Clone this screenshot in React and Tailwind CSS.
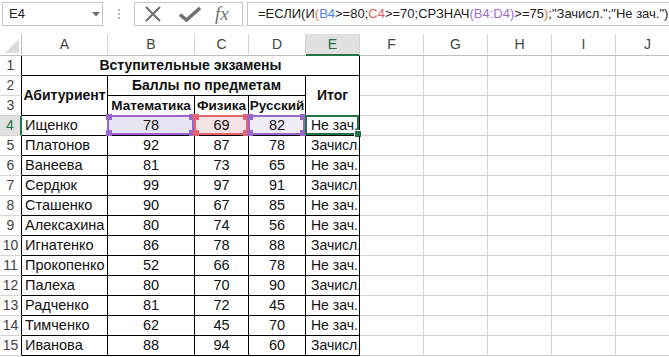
import React from 'react';

const rows = [
  ['Ищенко', 78, 69, 82, 'Не зач.'],
  ['Платонов', 92, 87, 78, 'Зачисл.'],
  ['Ванеева', 81, 73, 65, 'Не зач.'],
  ['Сердюк', 99, 97, 91, 'Зачисл.'],
  ['Сташенко', 90, 67, 85, 'Не зач.'],
  ['Алексахина', 80, 74, 56, 'Не зач.'],
  ['Игнатенко', 86, 78, 88, 'Зачисл.'],
  ['Прокопенко', 52, 66, 78, 'Не зач.'],
  ['Палеха', 80, 70, 90, 'Зачисл.'],
  ['Радченко', 81, 72, 45, 'Не зач.'],
  ['Тимченко', 62, 45, 70, 'Не зач.'],
  ['Иванова', 88, 94, 60, 'Зачисл.'],
];

const letters = ['A', 'B', 'C', 'D', 'E', 'F', 'G', 'H', 'I', 'J'];

function RowHead({ n, active }) {
  return (
    <div
      className={
        'flex items-center justify-center border-b border-b-[#d4d4d4] text-[14px] ' +
        (active
          ? 'bg-[#e1e1e1] text-[#217346] border-r-2 border-r-[#217346]'
          : 'bg-white text-[#444] border-r border-r-black')
      }
    >
      {n}
    </div>
  );
}

function Empty() {
  return <div className="border-r border-b border-[#d4d4d4]" />;
}

function Blanks() {
  return (
    <>
      <Empty />
      <Empty />
      <Empty />
      <Empty />
      <Empty />
    </>
  );
}

function Corners({ color }) {
  return (
    <>
      <span className={'absolute -left-[3px] -top-[3px] w-[6px] h-[6px] ' + color} />
      <span className={'absolute -right-[3px] -top-[3px] w-[6px] h-[6px] ' + color} />
      <span className={'absolute -left-[3px] -bottom-[3px] w-[6px] h-[6px] ' + color} />
      <span className={'absolute -right-[3px] -bottom-[3px] w-[6px] h-[6px] ' + color} />
    </>
  );
}

function FormulaBar() {
  return (
    <div className="flex items-start h-[34px] pt-[2px] pl-[2px] bg-white">
      <div className="relative w-[101px] h-[24px] border border-[#c6c6c6] flex items-center pl-[6px] text-[13px] text-[#222]">
        E4
        <svg className="absolute left-[89px] top-[9px]" width="8" height="5" viewBox="0 0 8 5">
          <path d="M0 0 L8 0 L4 4.5 Z" fill="#6d6d6d" />
        </svg>
      </div>
      <div className="w-[31px] h-[24px] flex flex-col items-center justify-center gap-[2px]">
        <span className="w-[2px] h-[2px] bg-[#b5b5b5]" />
        <span className="w-[2px] h-[2px] bg-[#b5b5b5]" />
        <span className="w-[2px] h-[2px] bg-[#b5b5b5]" />
      </div>
      <div className="w-[109px] h-[24px] border border-[#c6c6c6] flex items-center pl-[9px]">
        <svg width="18" height="18" viewBox="0 0 18 18">
          <path d="M2 2 L16 16 M16 2 L2 16" stroke="#707070" strokeWidth="2.1" />
        </svg>
        <svg className="ml-[17px]" width="22" height="18" viewBox="0 0 22 18">
          <path d="M1 9.5 L7.5 15 L21 3" stroke="#707070" strokeWidth="3.4" fill="none" />
        </svg>
        <span
          className="ml-[14px] text-[19px] italic text-[#707070] leading-none -mt-[2px]"
          style={{ fontFamily: '"Liberation Serif", serif' }}
        >
          fx
        </span>
      </div>
      <div className="ml-[4px] flex-1 h-[24px] border border-r-0 border-[#c6c6c6] flex items-center pl-[10px] text-[13px] text-[#222] whitespace-nowrap overflow-hidden">
        <span>=ЕСЛИ(И</span>
        <span className="text-[#e0793d]">(</span>
        <span className="text-[#4a86e8]">B4</span>
        <span>&gt;=80;</span>
        <span className="text-[#e06060]">C4</span>
        <span>&gt;=70;СРЗНАЧ</span>
        <span className="text-[#9b6fd0]">(B4:D4)</span>
        <span>&gt;=75</span>
        <span className="text-[#e0793d]">)</span>
        <span>;"Зачисл.";"Не зач.")</span>
      </div>
    </div>
  );
}

export default function App() {
  const bk = 'border-r border-b border-black';
  const dc = 'flex items-end pb-[1px] leading-[18px] text-[14.5px] ';
  return (
    <div
      className="w-[669px] h-[357px] overflow-hidden bg-white text-[#111]"
      style={{ fontFamily: '"Liberation Sans", Arial, sans-serif' }}
    >
      <FormulaBar />
      <div className="grid grid-cols-[22px_86px_87px_54px_57px_54px_64px_64px_64px_64px_64px] grid-rows-[22px_repeat(15,20px)] w-[680px] text-[14px]">
        {/* column headers */}
        <div className="relative border-r border-b border-[#bfbfbf] bg-white">
          <svg className="absolute right-[2px] bottom-[2px]" width="14" height="14" viewBox="0 0 14 14">
            <path d="M14 0 L14 14 L0 14 Z" fill="#dcdcdc" />
          </svg>
        </div>
        {letters.map((l) =>
          l === 'E' ? (
            <div
              key={l}
              className="flex items-center justify-center bg-[#e1e1e1] text-[#217346] border-r border-r-[#d4d4d4] border-b-2 border-b-[#217346]"
            >
              {l}
            </div>
          ) : (
            <div
              key={l}
              className="flex items-center justify-center bg-white text-[#444] border-r border-r-[#d4d4d4] border-b border-b-[#bfbfbf]"
            >
              {l}
            </div>
          )
        )}

        {/* row 1 */}
        <RowHead n={1} />
        <div className={'col-span-5 flex items-center justify-center font-bold ' + bk}>
          Вступительные экзамены
        </div>
        <Blanks />

        {/* row 2 */}
        <RowHead n={2} />
        <div className={'row-span-2 flex items-center justify-center font-bold ' + bk}>Абитуриент</div>
        <div className={'col-span-3 flex items-center justify-center font-bold ' + bk}>
          Баллы по предметам
        </div>
        <div className={'row-span-2 flex items-center justify-center font-bold ' + bk}>Итог</div>
        <Blanks />

        {/* row 3 */}
        <RowHead n={3} />
        <div className={'flex items-end justify-center font-bold text-[13.5px] leading-[18px] ' + bk}>Математика</div>
        <div className={'flex items-end justify-center font-bold text-[13.5px] leading-[18px] ' + bk}>Физика</div>
        <div className={'flex items-end justify-center font-bold text-[13.5px] leading-[18px] ' + bk}>Русский</div>
        <Blanks />

        {rows.map((r, i) => {
          const n = i + 4;
          const sel = n === 4;
          return (
            <React.Fragment key={n}>
              <RowHead n={n} active={sel} />
              <div className={dc + 'pl-[3px] ' + bk}>{r[0]}</div>
              <div className={'relative justify-center ' + dc + bk + (sel ? ' bg-[#e7e5f4]' : '')}>
                {r[1]}
                {sel && (
                  <div className="absolute -left-[1px] -top-[1px] right-0 bottom-0 border-2 border-[#9966cc]">
                    <Corners color="bg-[#9966cc]" />
                  </div>
                )}
              </div>
              <div className={'relative justify-center ' + dc + bk + (sel ? ' bg-[#f4e3e6]' : '')}>
                {r[2]}
                {sel && (
                  <div className="absolute -left-[1px] -top-[1px] right-0 bottom-0 border-2 border-[#e8646a]">
                    <Corners color="bg-[#e8646a]" />
                  </div>
                )}
              </div>
              <div className={'relative justify-center ' + dc + bk + (sel ? ' bg-[#f0ecf8]' : '')}>
                {r[3]}
                {sel && (
                  <div className="absolute -left-[1px] -top-[1px] right-0 bottom-0 border-2 border-[#9966cc]">
                    <Corners color="bg-[#9966cc]" />
                  </div>
                )}
              </div>
              <div className={'relative pl-[5px] flex items-end pb-[1px] leading-[18px] text-[14px] ' + bk}>
                {r[4]}
                {sel && (
                  <div className="absolute -left-[1px] -top-[1px] right-0 bottom-0 border-2 border-[#217346]">
                    <span className="absolute -right-[4px] -bottom-[4px] w-[6px] h-[6px] bg-[#217346] outline outline-1 outline-white" />
                  </div>
                )}
              </div>
              <Blanks />
            </React.Fragment>
          );
        })}
      </div>
    </div>
  );
}
